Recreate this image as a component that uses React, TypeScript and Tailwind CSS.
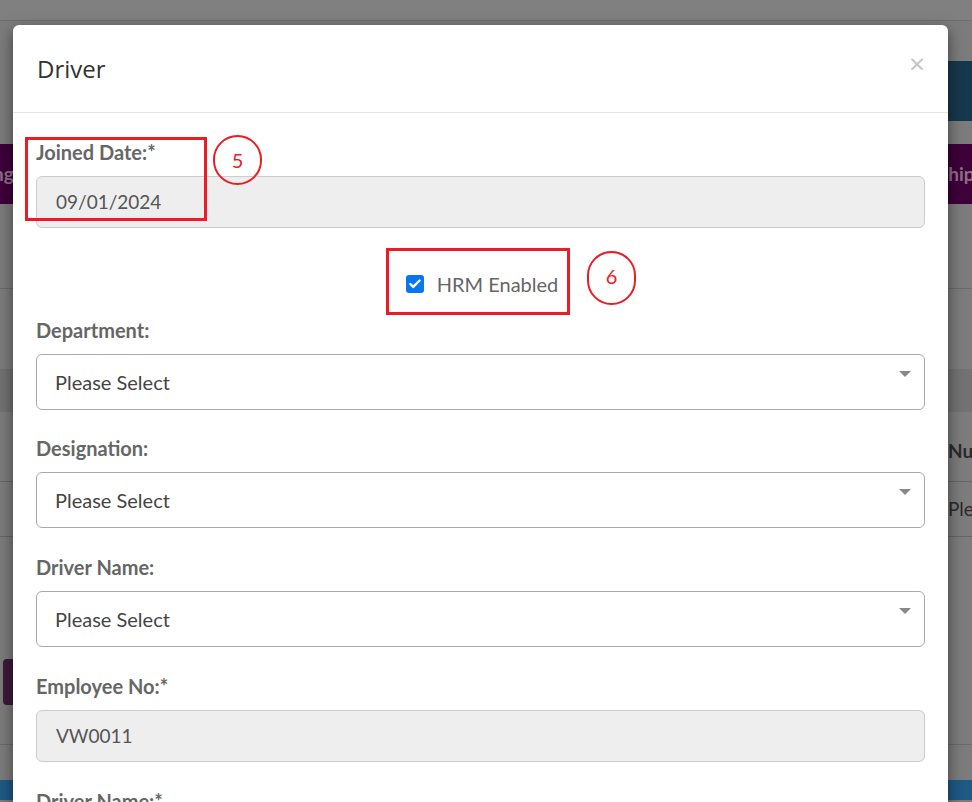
import { Check } from "lucide-react";

const body = { fontFamily: "Lato, 'Open Sans', sans-serif" };

function Label({ text }: { text: string }) {
  return (
    <div className="h-6 mb-3 text-[20px] leading-6 font-bold text-[#666]" style={body}>
      {text}
    </div>
  );
}

function ReadOnly({ value }: { value: string }) {
  return (
    <div className="h-[52px] rounded-md border border-[#ccc] bg-[#eee] px-[19px] flex items-center text-[19px] text-[#555]" style={body}>
      {value}
    </div>
  );
}

function Select() {
  return (
    <div className="h-[56px] rounded-md border border-[#aaa] bg-white pl-[18px] pr-[13px] flex items-center justify-between text-[20px] text-[#444]" style={body}>
      <span>Please Select</span>
      <span className="w-0 h-0 border-l-[6px] border-r-[6px] border-t-[6px] border-l-transparent border-r-transparent border-t-[#888] -mt-4" />
    </div>
  );
}

export default function App() {
  return (
    <div className="relative w-[972px] h-[802px] overflow-hidden bg-[#7c7c7c]">
      {/* page behind the backdrop */}
      <div className="flex flex-col" style={body}>
        <div className="h-[21px] bg-[#808080] border-b border-[#6c6c6c]" />
        <div className="mt-[40px] h-[60px] flex justify-end">
          <div className="w-[40px] bg-[#16384f]" />
        </div>
        <div className="mt-[23px] h-[60px] bg-[#3e003a] flex items-center justify-between text-[19px] font-bold text-[#8c7088]">
          <span className="-ml-[7px]">ng</span>
          <span className="w-[34px] overflow-hidden whitespace-nowrap">Shipping</span>
        </div>
        <div className="mt-[84px] border-t border-[#6a6a6a]" />
        <div className="mt-[80px] h-[43px] bg-[#727272]" />
        <div className="h-[70px] flex items-end justify-end border-b border-[#666]">
          <span className="w-[24px] overflow-hidden whitespace-nowrap pb-[16px] text-[19px] font-bold text-[#2a2a2a]">Number</span>
        </div>
        <div className="h-[55px] flex items-center justify-end border-b border-[#666]">
          <span className="w-[24px] overflow-hidden whitespace-nowrap text-[19px] text-[#2a2a2a]">Please</span>
        </div>
        <div className="mt-[122px] h-[46px] flex">
          <div className="ml-[3px] w-[20px] rounded bg-[#3b1a3a]" />
        </div>
        <div className="mt-[39px] border-t border-[#6a6a6a] h-[36px]" />
        <div className="h-[20px] bg-[#1e5a85]" />
      </div>

      {/* modal */}
      <div className="absolute left-[13px] top-[25px] w-[935px] h-[800px] bg-white rounded-md shadow-[0_5px_15px_rgba(0,0,0,0.5)] overflow-hidden">
        <div className="h-[88px] border-b border-[#e5e5e5] flex items-start justify-between pl-6 pr-[23px]">
          <div className="mt-[28px] text-[24px] leading-[32px] text-[#333]" style={{ fontFamily: "'Open Sans', sans-serif" }}>
            Driver
          </div>
          <div className="mt-[22px] text-[28px] leading-[32px] text-[#c4c4c4]" style={{ fontFamily: "'Open Sans', sans-serif" }}>
            ×
          </div>
        </div>
        <div className="px-[23px] pt-[27px]">
          <Label text="Joined Date:*" />
          <ReadOnly value="09/01/2024" />
          <div className="mt-[40px] h-[32px] flex items-center justify-center gap-[13px] pl-[3px]">
            <span className="w-[18px] h-[18px] rounded-[3px] bg-[#0a75f0] flex items-center justify-center">
              <Check className="w-[14px] h-[14px] text-white" strokeWidth={4} />
            </span>
            <span className="text-[20px] text-[#666]" style={body}>HRM Enabled</span>
          </div>
          <div className="mt-[18px]">
            <Label text="Department:" />
            <Select />
          </div>
          <div className="mt-[26px]">
            <Label text="Designation:" />
            <Select />
          </div>
          <div className="mt-[27px]">
            <Label text="Driver Name:" />
            <Select />
          </div>
          <div className="mt-[27px]">
            <Label text="Employee No:*" />
            <ReadOnly value="VW0011" />
          </div>
          <div className="mt-[27px]">
            <Label text="Driver Name:*" />
          </div>
        </div>
      </div>

      {/* annotations */}
      <div className="absolute left-[25px] top-[137px] w-[182px] h-[84px] border-[3px] border-[#ed1c24]" />
      <div className="absolute left-[213px] top-[135px] w-[49px] h-[50px] rounded-full border-2 border-[#ed1c24] flex items-center justify-center text-[20px] text-[#ed1c24]" style={body}>
        5
      </div>
      <div className="absolute left-[386px] top-[248px] w-[184px] h-[67px] border-[3px] border-[#ed1c24]" />
      <div className="absolute left-[587px] top-[251px] w-[49px] h-[54px] rounded-full border-2 border-[#ed1c24] flex items-center justify-center pb-[4px] text-[20px] text-[#ed1c24]" style={body}>
        6
      </div>
    </div>
  );
}
